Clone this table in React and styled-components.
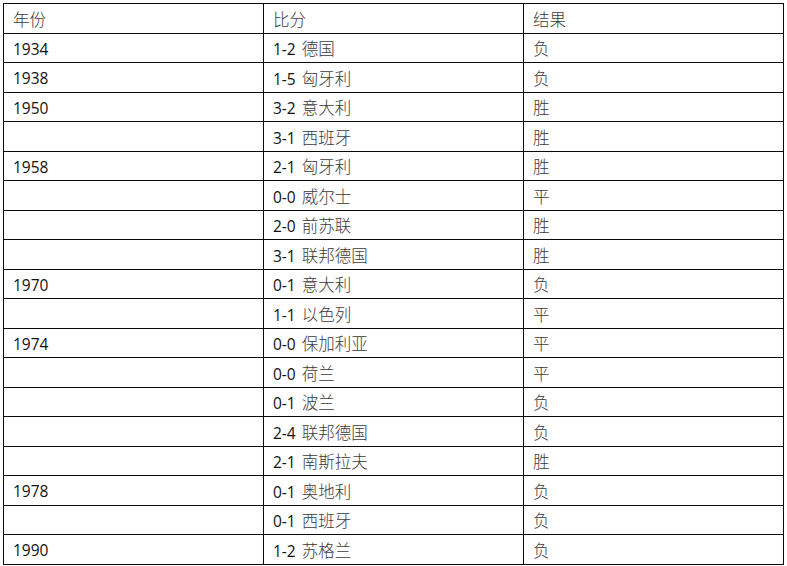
import React from 'react';
import styled, { createGlobalStyle } from 'styled-components';

const GlobalStyle = createGlobalStyle`
  html, body {
    margin: 0;
    padding: 0;
    background: #fff;
  }
`;

const rows = [
  ['1934', '1-2', '德国', '负'],
  ['1938', '1-5', '匈牙利', '负'],
  ['1950', '3-2', '意大利', '胜'],
  ['', '3-1', '西班牙', '胜'],
  ['1958', '2-1', '匈牙利', '胜'],
  ['', '0-0', '威尔士', '平'],
  ['', '2-0', '前苏联', '胜'],
  ['', '3-1', '联邦德国', '胜'],
  ['1970', '0-1', '意大利', '负'],
  ['', '1-1', '以色列', '平'],
  ['1974', '0-0', '保加利亚', '平'],
  ['', '0-0', '荷兰', '平'],
  ['', '0-1', '波兰', '负'],
  ['', '2-4', '联邦德国', '负'],
  ['', '2-1', '南斯拉夫', '胜'],
  ['1978', '0-1', '奥地利', '负'],
  ['', '0-1', '西班牙', '负'],
  ['1990', '1-2', '苏格兰', '负'],
];

const Page = styled.div`
  padding: 3px 0 0 3px;
`;

const Table = styled.table`
  border-collapse: collapse;
  table-layout: fixed;
  width: 781px;
  font-family: "Open Sans", "Noto Sans CJK SC", sans-serif;
  font-size: 15.5px;
  color: #111;
`;

const Row = styled.tr`
  height: 29.5px;
`;

const Cell = styled.td`
  box-sizing: border-box;
  border: 1px solid #0a0a0a;
  padding: 2px 9px 0 9px;
  width: 260px;
  white-space: nowrap;
  overflow: hidden;
  vertical-align: middle;
  line-height: 20px;
`;

const Cjk = styled.span`
  font-family: "Noto Sans CJK SC", sans-serif;
  font-size: 16.5px;
  font-weight: 300;
  color: #3a3a3a;
  margin-left: ${(p) => (p.$gap ? '2px' : '0')};
`;

export default function App() {
  return (
    <Page>
      <GlobalStyle />
      <Table>
        <tbody>
          <Row>
            <Cell><Cjk>年份</Cjk></Cell>
            <Cell><Cjk>比分</Cjk></Cell>
            <Cell><Cjk>结果</Cjk></Cell>
          </Row>
          {rows.map(([year, score, team, result], i) => (
            <Row key={i}>
              <Cell>{year}</Cell>
              <Cell>
                {score} <Cjk $gap>{team}</Cjk>
              </Cell>
              <Cell><Cjk>{result}</Cjk></Cell>
            </Row>
          ))}
        </tbody>
      </Table>
    </Page>
  );
}
